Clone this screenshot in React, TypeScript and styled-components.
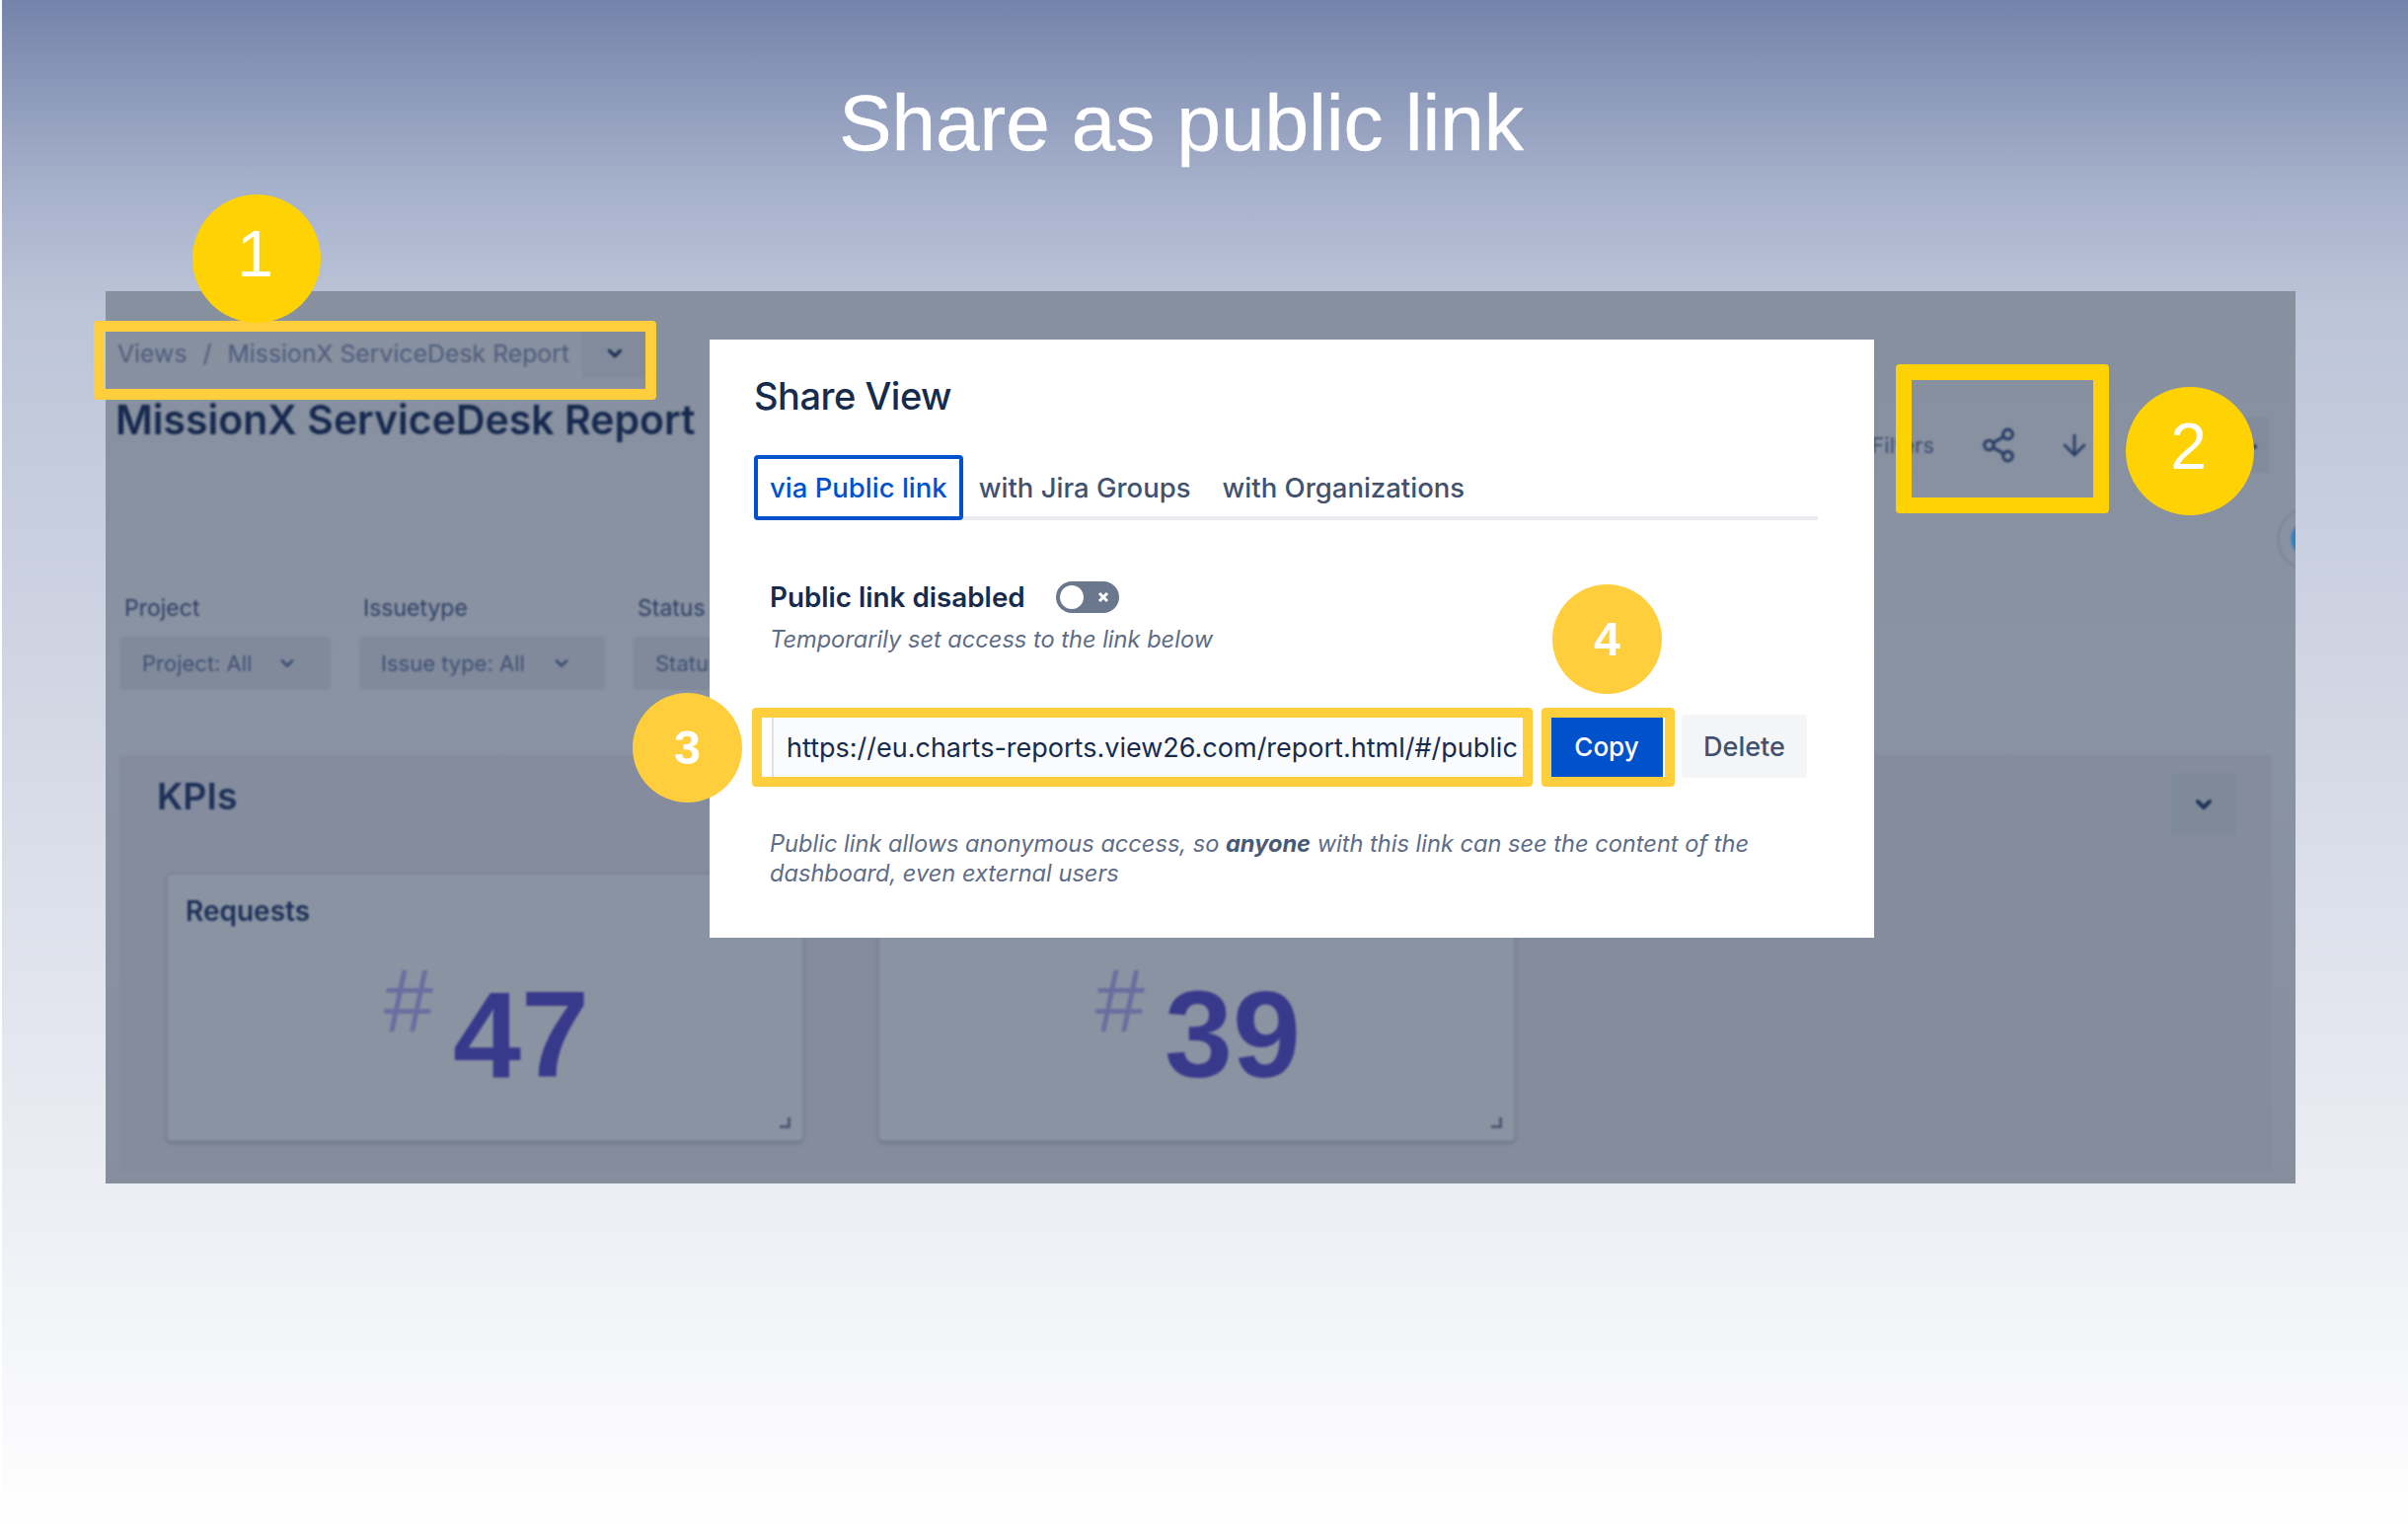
import React from "react";
import styled, { createGlobalStyle } from "styled-components";
import { ArrowDown, ChevronDown, Share2 } from "lucide-react";

const GlobalStyle = createGlobalStyle`
  html, body {
    margin: 0;
    padding: 0;
    background: #ffffff;
    font-family: Inter, "Liberation Sans", sans-serif;
  }
`;

const App = () => {
  return (
    <Page>
      <GlobalStyle />
      <Heading>Share as public link</Heading>
      <Panel>
        <Dashboard>
          <Crumbs>
            <span>Views</span>
            <span>/</span>
            <span>MissionX ServiceDesk Report</span>
            <CrumbButton>
              <ChevronDown size={22} strokeWidth={3.5} />
            </CrumbButton>
          </Crumbs>
          <TitleRow>
            <Title>MissionX ServiceDesk Report</Title>
            <Actions>
              <FiltersText>Filters</FiltersText>
              <Share2 size={38} strokeWidth={2} />
              <ArrowDown size={34} strokeWidth={2} />
              <MoreButton>•</MoreButton>
            </Actions>
          </TitleRow>
          <HelpDot />
          <FilterRow>
            <Filter $width={213}>
              <FilterLabel>Project</FilterLabel>
              <Select>
                Project: All
                <ChevronDown size={20} strokeWidth={3.5} />
              </Select>
            </Filter>
            <Filter $width={249}>
              <FilterLabel>Issuetype</FilterLabel>
              <Select>
                Issue type: All
                <ChevronDown size={20} strokeWidth={3.5} />
              </Select>
            </Filter>
            <Filter $width={250}>
              <FilterLabel>Status</FilterLabel>
              <Select>Status: All</Select>
            </Filter>
          </FilterRow>
          <Section>
            <SectionHead>
              <SectionTitle>KPIs</SectionTitle>
              <SectionToggle>
                <ChevronDown size={24} strokeWidth={4} />
              </SectionToggle>
            </SectionHead>
            <Cards>
              <Card>
                <CardTitle>Requests</CardTitle>
                <Metric>
                  <Hash>#</Hash>
                  <MetricValue>47</MetricValue>
                </Metric>
                <ResizeCorner />
              </Card>
              <Card>
                <CardTitle>Resolved</CardTitle>
                <Metric>
                  <Hash>#</Hash>
                  <MetricValue>39</MetricValue>
                </Metric>
                <ResizeCorner />
              </Card>
            </Cards>
          </Section>
        </Dashboard>

        <Modal>
          <ModalTitle>Share View</ModalTitle>
          <Tabs>
            <Tab $active>via Public link</Tab>
            <Tab>with Jira Groups</Tab>
            <Tab>with Organizations</Tab>
          </Tabs>
          <ToggleRow>
            <ToggleLabel>Public link disabled</ToggleLabel>
            <Toggle>
              <ToggleKnob />
              <ToggleCross viewBox="0 0 12 12">
                <path d="M2 2 L10 10 M10 2 L2 10" />
              </ToggleCross>
            </Toggle>
          </ToggleRow>
          <Hint>Temporarily set access to the link below</Hint>
          <LinkRow>
            <LinkField>
              <LinkText>https://eu.charts-reports.view26.com/report.html/#/public</LinkText>
            </LinkField>
            <CopyButton>Copy</CopyButton>
            <DeleteButton>Delete</DeleteButton>
          </LinkRow>
          <Note>
            Public link allows anonymous access, so <b>anyone</b> with this link can see the content of the
            dashboard, even external users
          </Note>
        </Modal>
      </Panel>

      <Frame $left={95} $top={325} $width={570} $height={80} $color="#ffce3d" $size={11} />
      <Frame $left={1921} $top={369} $width={216} $height={151} $color="#ffd204" $size={16} />
      <Frame $left={762} $top={717} $width={791} $height={80} $color="#ffce3d" $size={10} />
      <Frame $left={1562} $top={717} $width={135} $height={80} $color="#ffce3d" $size={10} />

      <Badge $left={195} $top={197} $size={130} $color="#ffd204" $light>1</Badge>
      <Badge $left={2154} $top={392} $size={130} $color="#ffd204" $light>2</Badge>
      <Badge $left={641} $top={702} $size={111} $color="#ffce3d">3</Badge>
      <Badge $left={1573} $top={592} $size={111} $color="#ffce3d">4</Badge>
    </Page>
  );
};

export default App;

const Page = styled.div`
  position: relative;
  width: 2440px;
  height: 1548px;
  overflow: hidden;
  padding-left: 2px;
  box-sizing: border-box;
  background: linear-gradient(
    180deg,
    #7483aa 0%,
    #a5b0ca 12%,
    #bcc4d8 20%,
    #d3d8e5 47%,
    #eceef4 78%,
    #ffffff 100%
  );
  background-clip: content-box;
`;

const Heading = styled.h1`
  margin: 0;
  height: 295px;
  padding-top: 75px;
  padding-right: 48px;
  box-sizing: border-box;
  text-align: center;
  color: #ffffff;
  font-family: "Liberation Sans", Arial, sans-serif;
  font-size: 80px;
  line-height: 100px;
  font-weight: 400;
  -webkit-text-stroke: 0.5px #ffffff;
`;

const Panel = styled.div`
  position: relative;
  margin-left: 105px;
  width: 2219px;
  height: 904px;
  overflow: hidden;
  background: linear-gradient(180deg, #87909f 0%, #8a93a3 50%, #878f9f 100%);
`;

const Dashboard = styled.div`
  position: relative;
  height: 100%;
  display: flex;
  flex-direction: column;
  filter: blur(0.9px);
  color: #24395f;
`;

const Crumbs = styled.div`
  display: flex;
  align-items: center;
  gap: 16px;
  height: 52px;
  margin-top: 37px;
  padding-left: 12px;
  font-size: 24.8px;
  color: #4b5b7c;
`;

const CrumbButton = styled.div`
  display: flex;
  align-items: center;
  justify-content: center;
  width: 66px;
  height: 50px;
  margin-left: -3px;
  background: #828b9c;
  color: #1f3358;
`;

const TitleRow = styled.div`
  display: flex;
  align-items: flex-start;
  justify-content: space-between;
  height: 217px;
  padding-left: 10px;
`;

const Title = styled.div`
  margin-top: 15px;
  font-size: 41px;
  line-height: 52px;
  font-weight: 600;
  color: #16294e;
  white-space: nowrap;
`;

const Actions = styled.div`
  display: flex;
  align-items: center;
  gap: 41px;
  height: 56px;
  margin-top: 39px;
  margin-right: 27px;
  color: #2a3f66;
`;

const FiltersText = styled.span`
  margin-right: 5px;
  font-size: 22px;
  color: #3a4c70;
`;

const MoreButton = styled.div`
  display: flex;
  align-items: center;
  justify-content: flex-end;
  width: 55px;
  height: 56px;
  margin-left: 84px;
  padding-right: 10px;
  box-sizing: border-box;
  background: #828b9c;
  font-size: 16px;
`;

const HelpDot = styled.div`
  position: absolute;
  top: 218px;
  left: 2200px;
  width: 66px;
  height: 66px;
  border: 3px solid #7f8899;
  border-radius: 50%;
  box-sizing: border-box;
  background: radial-gradient(circle, #2f80c0 0 18px, transparent 19px);
`;

const FilterRow = styled.div`
  display: flex;
  gap: 29px;
  padding-left: 15px;
`;

const Filter = styled.div<{ $width: number }>`
  width: ${(p) => p.$width}px;
`;

const FilterLabel = styled.div`
  padding-left: 4px;
  font-size: 23px;
  line-height: 30px;
  color: #2e4066;
`;

const Select = styled.div`
  display: flex;
  align-items: center;
  justify-content: space-between;
  height: 54px;
  margin-top: 14px;
  padding: 0 34px 0 22px;
  border-radius: 4px;
  background: #808a9b;
  font-size: 22px;
  color: #3f5073;
  white-space: nowrap;
`;

const Section = styled.div`
  display: flex;
  flex-direction: column;
  width: 2181px;
  height: 422px;
  margin: 66px 0 0 14px;
  box-sizing: border-box;
  background: #848c9e;
`;

const SectionHead = styled.div`
  display: flex;
  justify-content: space-between;
  align-items: flex-start;
  padding: 16px 36px 0 38px;
  height: 119px;
  box-sizing: border-box;
`;

const SectionTitle = styled.div`
  margin-top: 2px;
  font-size: 37.5px;
  line-height: 48px;
  font-weight: 600;
  color: #1d3057;
`;

const SectionToggle = styled.div`
  display: flex;
  align-items: center;
  justify-content: center;
  width: 66px;
  height: 64px;
  margin-top: 2px;
  border-radius: 4px;
  background: #7f8a99;
  color: #1f3358;
`;

const Cards = styled.div`
  display: flex;
  gap: 74px;
  padding-left: 47px;
`;

const Card = styled.div`
  position: relative;
  display: flex;
  flex-direction: column;
  width: 647px;
  height: 273px;
  box-sizing: border-box;
  padding: 20px 18px;
  border: 2px solid #7c8596;
  border-radius: 6px;
  background: #8a93a2;
  box-shadow: 0 2px 3px rgba(60, 70, 90, 0.25);
`;

const CardTitle = styled.div`
  font-size: 28px;
  line-height: 34px;
  font-weight: 600;
  color: #1d3057;
`;

const Metric = styled.div`
  display: flex;
  justify-content: center;
  align-items: flex-start;
  gap: 20px;
  margin-top: 38px;
  padding-left: 3px;
`;

const Hash = styled.div`
  margin-top: -3px;
  font-family: "Liberation Sans", sans-serif;
  font-size: 90px;
  line-height: 78px;
  font-weight: 400;
  color: #686e9f;
`;

const MetricValue = styled.div`
  margin-top: 10px;
  font-family: "Liberation Sans", sans-serif;
  font-size: 124px;
  line-height: 120px;
  font-weight: 700;
  color: #37398b;
`;

const ResizeCorner = styled.div`
  position: absolute;
  right: 12px;
  bottom: 12px;
  width: 11px;
  height: 11px;
  border-right: 3px solid #4f5a74;
  border-bottom: 3px solid #4f5a74;
  box-sizing: border-box;
`;

const Modal = styled.div`
  position: absolute;
  left: 612px;
  top: 49px;
  width: 1180px;
  height: 606px;
  box-sizing: border-box;
  padding: 33px 57px 0 45px;
  background: #ffffff;
`;

const ModalTitle = styled.div`
  font-size: 38px;
  line-height: 48px;
  font-weight: 500;
  letter-spacing: -0.5px;
  color: #172b4d;
`;

const Tabs = styled.div`
  display: flex;
  margin-top: 36px;
  border-bottom: 4px solid #ebecf0;
  height: 62px;
`;

const Tab = styled.div<{ $active?: boolean }>`
  display: flex;
  align-items: center;
  box-sizing: border-box;
  height: 66px;
  padding: 0 ${(p) => (p.$active ? "12px" : "16px")};
  border: ${(p) => (p.$active ? "4px solid #0052cc" : "none")};
  border-radius: 4px;
  font-size: 27.5px;
  font-weight: 500;
  color: ${(p) => (p.$active ? "#0052cc" : "#42526e")};
  white-space: nowrap;
`;

const ToggleRow = styled.div`
  display: flex;
  align-items: center;
  gap: 31px;
  margin: 62px 0 0 16px;
  height: 32px;
`;

const ToggleLabel = styled.div`
  font-size: 27.8px;
  font-weight: 600;
  color: #172b4d;
`;

const Toggle = styled.div`
  position: relative;
  display: flex;
  align-items: center;
  width: 64px;
  height: 32px;
  border-radius: 16px;
  background: #6b778c;
`;

const ToggleKnob = styled.div`
  width: 24px;
  height: 24px;
  margin-left: 4px;
  border-radius: 50%;
  background: #ffffff;
`;

const ToggleCross = styled.svg`
  position: absolute;
  right: 10px;
  top: 10px;
  width: 12px;
  height: 12px;
  path {
    stroke: #ffffff;
    stroke-width: 3;
    fill: none;
  }
`;

const Hint = styled.div`
  margin: 12px 0 0 16px;
  font-size: 23.6px;
  line-height: 30px;
  font-style: italic;
  color: #5e6c84;
`;

const LinkRow = styled.div`
  display: flex;
  align-items: center;
  height: 60px;
  margin: 64px 0 0 18px;
`;

const LinkField = styled.div`
  display: flex;
  align-items: center;
  width: 759px;
  height: 60px;
  box-sizing: border-box;
  padding-left: 13px;
  border-left: 2px solid #dfe1e6;
  background: #fafbfc;
  overflow: hidden;
`;

const LinkText = styled.div`
  font-size: 27px;
  color: #172b4d;
  white-space: nowrap;
`;

const CopyButton = styled.div`
  display: flex;
  align-items: center;
  justify-content: center;
  width: 114px;
  height: 60px;
  box-sizing: border-box;
  margin-left: 30px;
  padding-bottom: 2px;
  background: #0052cc;
  color: #ffffff;
  font-size: 26px;
  font-weight: 500;
`;

const DeleteButton = styled.div`
  display: flex;
  align-items: center;
  justify-content: center;
  width: 127px;
  height: 64px;
  margin: -2px 0 0 19px;
  border-radius: 4px;
  background: #f4f5f7;
  color: #42526e;
  font-size: 27px;
  font-weight: 500;
`;

const Note = styled.div`
  margin: 53px 0 0 16px;
  width: 1040px;
  font-size: 23.6px;
  line-height: 30px;
  font-style: italic;
  color: #5e6c84;

  b {
    font-weight: 700;
    color: #4a5a76;
  }
`;

const Frame = styled.div<{
  $left: number;
  $top: number;
  $width: number;
  $height: number;
  $color: string;
  $size: number;
}>`
  position: absolute;
  left: ${(p) => p.$left}px;
  top: ${(p) => p.$top}px;
  width: ${(p) => p.$width}px;
  height: ${(p) => p.$height}px;
  box-sizing: border-box;
  border: ${(p) => p.$size}px solid ${(p) => p.$color};
  border-radius: 4px;
`;

const Badge = styled.div<{
  $left: number;
  $top: number;
  $size: number;
  $color: string;
  $light?: boolean;
}>`
  position: absolute;
  left: ${(p) => p.$left}px;
  top: ${(p) => p.$top}px;
  width: ${(p) => p.$size}px;
  height: ${(p) => p.$size}px;
  box-sizing: border-box;
  display: flex;
  align-items: center;
  justify-content: center;
  padding-bottom: ${(p) => (p.$light ? "10px" : "0")};
  padding-right: ${(p) => (p.$light ? "3px" : "0")};
  border-radius: 50%;
  background: ${(p) => p.$color};
  color: #ffffff;
  font-family: "Liberation Sans", Arial, sans-serif;
  font-size: ${(p) => (p.$light ? "66px" : "48px")};
  font-weight: ${(p) => (p.$light ? 400 : 700)};
`;
